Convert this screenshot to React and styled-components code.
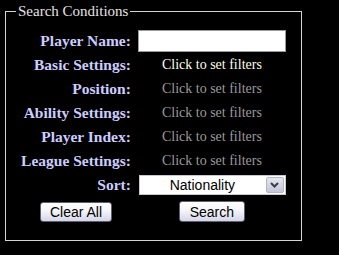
import React, { useState } from "react";
import styled, { createGlobalStyle } from "styled-components";

const GlobalStyle = createGlobalStyle`
  html, body {
    margin: 0;
    padding: 0;
    background: #000;
  }
  body {
    width: 339px;
    height: 255px;
    overflow: hidden;
    font-family: "Liberation Serif", "Times New Roman", serif;
  }
`;

const Page = styled.div`
  padding: 4px 37px 0 5px;
`;

const Fieldset = styled.fieldset`
  margin: 0;
  padding: 11px 0 0;
  height: 224px;
  border: 1px solid #d4d4d4;
  min-width: 0;
`;

const Legend = styled.legend`
  margin-left: 10px;
  padding: 0 2px 0 2px;
  color: #e4e4e4;
  font-size: 15px;
  line-height: 14px;
`;

const Form = styled.div`
  display: grid;
  grid-template-columns: auto 148px;
  grid-auto-rows: 24px;
  column-gap: 7px;
  justify-content: center;
  align-items: center;
`;

const Label = styled.div`
  text-align: right;
  color: #ccccff;
  font-weight: bold;
  font-size: 15.5px;
  white-space: nowrap;
`;

const Value = styled.div`
  text-align: center;
  font-size: 14px;
  white-space: nowrap;
  cursor: pointer;
  color: ${(p) => (p.$active ? "#ffffe6" : "#9a9a9a")};
`;

const TextInput = styled.input`
  box-sizing: border-box;
  width: 148px;
  height: 22px;
  margin: 0;
  border: 1px solid #9a9a9a;
  background: #fff;
  font-size: 13px;
  padding: 0 3px;
  outline: none;
`;

const SelectBox = styled.div`
  display: flex;
  box-sizing: border-box;
  width: 147px;
  height: 20px;
  margin-left: 1px;
  background: #fff;
  border: 1px solid #c8c8d0;
`;

const Select = styled.select`
  flex: 1;
  min-width: 0;
  appearance: none;
  border: none;
  background: transparent;
  margin: 0;
  padding: 0;
  font-family: "Liberation Sans", Arial, sans-serif;
  font-size: 14px;
  text-align: center;
  text-align-last: center;
  color: #000;
  outline: none;
`;

const Arrow = styled.div`
  width: 16px;
  margin: 1px;
  display: flex;
  align-items: center;
  justify-content: center;
  background: linear-gradient(#e4e6f0, #c4c6d6);
  border: 1px solid #b0b4c8;
  border-radius: 2px;
`;

const ButtonCell = styled.div`
  display: flex;
  justify-content: center;
  align-self: center;
  padding-top: 5px;
`;

const Button = styled.button`
  height: ${(p) => p.$h || 21}px;
  padding: 0 ${(p) => p.$px || 8}px;
  margin: 0;
  border: 1px solid #5c6070;
  border-radius: 3px;
  background: linear-gradient(#ffffff 0%, #f4f4fa 45%, #d4d6e6 100%);
  font-family: "Liberation Sans", Arial, sans-serif;
  font-size: 14px;
  color: #000;
  cursor: pointer;
`;

const rows = [
  { label: "Basic Settings:", active: true },
  { label: "Position:" },
  { label: "Ability Settings:" },
  { label: "Player Index:" },
  { label: "League Settings:" },
];

export default function App() {
  const [name, setName] = useState("");
  const [sort, setSort] = useState("Nationality");

  return (
    <Page>
      <GlobalStyle />
      <Fieldset>
        <Legend>Search Conditions</Legend>
        <Form>
          <Label>Player Name:</Label>
          <TextInput value={name} onChange={(e) => setName(e.target.value)} />
          {rows.map((r) => (
            <React.Fragment key={r.label}>
              <Label>{r.label}</Label>
              <Value $active={r.active}>Click to set filters</Value>
            </React.Fragment>
          ))}
          <Label>Sort:</Label>
          <SelectBox>
            <Select value={sort} onChange={(e) => setSort(e.target.value)}>
              <option>Nationality</option>
              <option>Name</option>
              <option>Position</option>
              <option>Age</option>
            </Select>
            <Arrow>
              <svg width="9" height="6" viewBox="0 0 9 6">
                <path d="M1 1 L4.5 4.5 L8 1" fill="none" stroke="#3a3c48" strokeWidth="2" />
              </svg>
            </Arrow>
          </SelectBox>
          <ButtonCell>
            <Button $h={20} $px={9}>Clear All</Button>
          </ButtonCell>
          <ButtonCell>
            <Button $h={21} $px={10}>Search</Button>
          </ButtonCell>
        </Form>
      </Fieldset>
    </Page>
  );
}
